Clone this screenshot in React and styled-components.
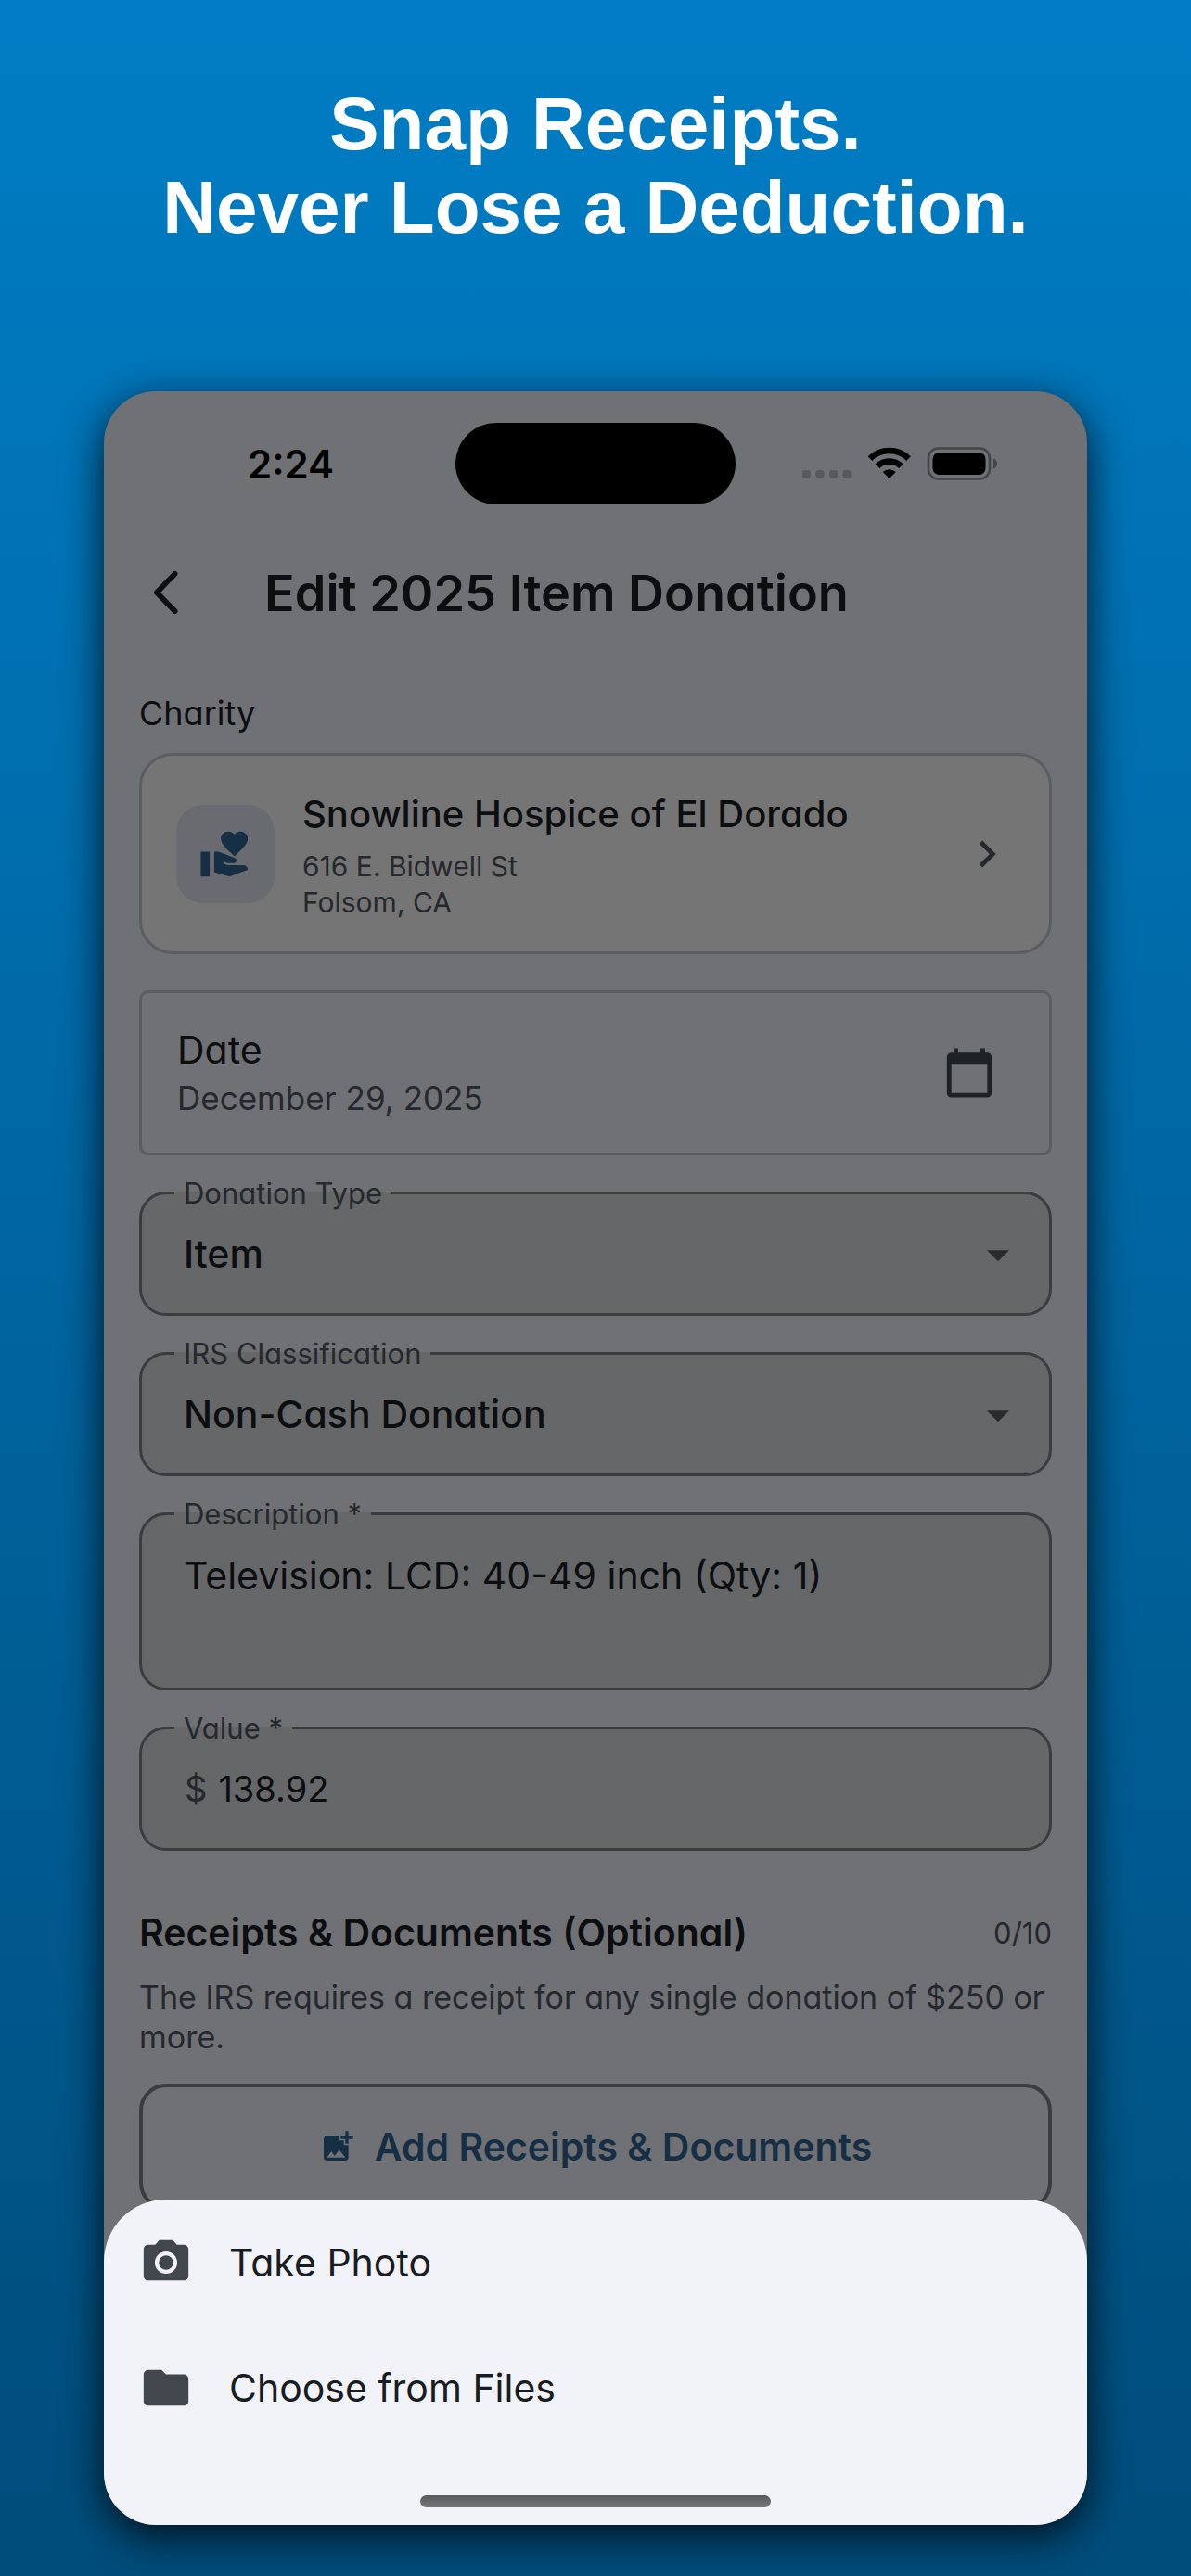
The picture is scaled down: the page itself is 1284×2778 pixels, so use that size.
import React from 'react';
import styled, { createGlobalStyle } from 'styled-components';
import {
  MdAddPhotoAlternate,
  MdArrowDropDown,
  MdCalendarToday,
  MdCameraAlt,
  MdChevronRight,
  MdFolder,
  MdVolunteerActivism,
} from 'react-icons/md';

const palette = {
  screen: '#707175',
  card: '#757575',
  field: '#666769',
  tile: '#696b70',
  text: '#0c0e10',
  subtext: '#25282c',
  outline: '#3a3d40',
  softOutline: '#5c5d60',
  accent: '#172f45',
  sheet: '#f1f3f9',
};

const GlobalStyle = createGlobalStyle`
  * {
    box-sizing: border-box;
  }
  body {
    margin: 0;
    font-family: Inter, 'Open Sans', sans-serif;
    font-feature-settings: 'cv11';
  }
  button,
  input,
  select,
  textarea {
    font: inherit;
    font-feature-settings: inherit;
    color: inherit;
    margin: 0;
    padding: 0;
    border: none;
    background: none;
    text-align: left;
  }
`;

const Page = styled.div`
  min-height: 100vh;
  display: flex;
  flex-direction: column;
  padding: 89px 112px 55px;
  background: linear-gradient(180deg, #007dc5 0%, #004c7a 100%);
`;

const Headline = styled.h1`
  margin: 0 -60px;
  font-family: 'Liberation Sans', Arial, sans-serif;
  font-size: 80px;
  line-height: 90px;
  font-weight: 700;
  text-align: center;
  color: white;
`;

const Phone = styled.main`
  flex: 1;
  position: relative;
  display: flex;
  flex-direction: column;
  margin-top: 153px;
  border-radius: 56px;
  overflow: hidden;
  background: ${palette.screen};
  color: ${palette.text};
  box-shadow: 0 12px 44px rgba(0, 0, 0, 0.8);
`;

const StatusBar = styled.div`
  display: grid;
  grid-template-columns: 1fr 302px 1fr;
  align-items: center;
  padding-top: 34px;
  .time {
    padding-left: 155px;
    font-size: 42px;
    font-weight: 600;
    color: black;
  }
  .island {
    height: 88px;
    border-radius: 44px;
    background: black;
  }
  .signals {
    padding-left: 72px;
  }
  svg {
    display: block;
  }
`;

const AppBar = styled.header`
  display: flex;
  align-items: center;
  gap: 83px;
  height: 118px;
  margin-top: 36px;
  padding-left: 40px;
  h2 {
    margin: 0;
    font-size: 54px;
    font-weight: 600;
  }
  svg {
    display: block;
  }
`;

const Form = styled.div`
  display: flex;
  flex-direction: column;
  padding: 46px 38px 0;
`;

const SectionLabel = styled.div`
  font-size: 36px;
  line-height: 50px;
`;

const CharityCard = styled.button`
  display: flex;
  align-items: center;
  margin-top: 18px;
  padding: 0 38px 0 37px;
  height: 217px;
  border: 3px solid ${palette.softOutline};
  border-radius: 36px;
  background: ${palette.card};
  .tile {
    display: flex;
    align-items: center;
    justify-content: center;
    width: 106px;
    height: 106px;
    margin-right: 30px;
    border-radius: 29px;
    background: ${palette.tile};
    color: ${palette.accent};
  }
  .info {
    flex: 1;
  }
  .name {
    margin-bottom: 8px;
    font-size: 40px;
    line-height: 58px;
    font-weight: 500;
  }
  .address {
    font-size: 30px;
    line-height: 39px;
    color: ${palette.subtext};
  }
  svg {
    display: block;
  }
`;

const DateBox = styled.button`
  display: flex;
  align-items: center;
  justify-content: space-between;
  margin-top: 39px;
  padding: 0 57px 0 38px;
  height: 178px;
  border: 3px solid ${palette.softOutline};
  border-radius: 10px;
  .title {
    font-size: 41px;
    line-height: 54px;
  }
  .value {
    font-size: 35px;
    line-height: 50px;
    color: ${palette.subtext};
  }
`;

const Field = styled.div`
  position: relative;
  display: flex;
  margin-top: 39px;
  height: ${(props) => (props.$tall ? '192px' : '134px')};
  border: 3px solid ${palette.outline};
  border-radius: 29px;
  background: ${palette.field};
  label {
    position: absolute;
    top: -20px;
    left: 35px;
    padding: 0 10px;
    font-size: 31px;
    line-height: 38px;
    color: ${palette.subtext};
    background: linear-gradient(
      ${palette.screen} 17px,
      ${palette.field} 17px
    );
  }
  input,
  select,
  textarea {
    flex: 1;
    min-width: 0;
    appearance: none;
    resize: none;
    outline: none;
    padding: 0 45px;
    font-size: 41px;
    line-height: 54px;
  }
  select {
    font-weight: 500;
  }
  textarea {
    padding-top: 38px;
  }
  .prefix {
    align-self: center;
    padding-left: 46px;
    font-size: 38px;
    color: ${palette.subtext};
  }
  .prefix + input {
    padding-left: 12px;
    font-size: 38px;
  }
  svg {
    position: absolute;
    right: 26px;
    top: 36px;
    color: #292a2b;
    pointer-events: none;
  }
`;

const ReceiptsHeader = styled.div`
  display: flex;
  align-items: center;
  justify-content: space-between;
  margin-top: 58px;
  h3 {
    margin: 0;
    font-size: 41px;
    line-height: 60px;
    font-weight: 600;
  }
  span {
    font-size: 31px;
    color: ${palette.subtext};
  }
`;

const Hint = styled.p`
  margin: 18px 0 0;
  font-size: 34px;
  line-height: 43px;
  color: ${palette.subtext};
`;

const AddButton = styled.button`
  display: flex;
  align-items: center;
  justify-content: center;
  gap: 20px;
  height: 136px;
  margin-top: 29px;
  border: 4px solid ${palette.outline};
  border-radius: 29px;
  font-size: 41px;
  font-weight: 600;
  color: ${palette.accent};
`;

const Sheet = styled.div`
  position: absolute;
  left: 0;
  right: 0;
  bottom: 0;
  display: flex;
  flex-direction: column;
  border-radius: 67px 67px 0 0;
  background: ${palette.sheet};
`;

const SheetItem = styled.button`
  display: flex;
  align-items: center;
  gap: 39px;
  height: 135px;
  padding-left: 38px;
  font-size: 41px;
  color: #191c20;
  svg {
    color: #42474e;
  }
`;

const HomeIndicator = styled.div`
  align-self: center;
  width: 378px;
  height: 13px;
  margin: 49px 0 19px;
  border-radius: 7px;
  background: linear-gradient(#55585c, #787878);
`;

const StatusIcons = () => (
  <svg width="212" height="36" viewBox="0 0 212 36">
    <g fill="#58595c">
      <rect x="0" y="25" width="9" height="9" rx="3" />
      <rect x="14.5" y="25" width="9" height="9" rx="3" />
      <rect x="29" y="25" width="9" height="9" rx="3" />
      <rect x="43.5" y="25" width="9" height="9" rx="3" />
    </g>
    <g fill="none" stroke="#000" strokeWidth="6.6">
      <path d="M73 12.6a29.5 29.5 0 0 1 41.5 0" />
      <path d="M81 20.6a18.3 18.3 0 0 1 25.5 0" />
    </g>
    <path d="M93.8 34l-7-7a10 10 0 0 1 14 0z" />
    <rect
      x="136"
      y="1.5"
      width="66"
      height="33"
      rx="10.5"
      fill="none"
      stroke="#45464a"
      strokeWidth="2.6"
    />
    <rect x="140.5" y="6" width="57" height="24" rx="7" />
    <path d="M206 12.5q4 1.5 4 5.5t-4 5.5z" fill="#45464a" />
  </svg>
);

const BackIcon = () => (
  <svg width="50" height="50" viewBox="0 0 50 50">
    <path
      d="M36.5 5L17 25l19.5 20"
      fill="none"
      stroke="currentColor"
      strokeWidth="6"
      strokeLinecap="round"
      strokeLinejoin="round"
    />
  </svg>
);

const SelectField = ({ id, label, value }) => (
  <Field>
    <label htmlFor={id}>{label}</label>
    <select id={id} defaultValue={value}>
      <option>{value}</option>
    </select>
    <MdArrowDropDown size={58} />
  </Field>
);

const App = () => {
  return (
    <Page>
      <GlobalStyle />
      <Headline>
        Snap Receipts.
        <br />
        Never Lose a Deduction.
      </Headline>
      <Phone>
        <StatusBar>
          <span className="time">2:24</span>
          <span className="island" />
          <span className="signals">
            <StatusIcons />
          </span>
        </StatusBar>
        <AppBar>
          <button type="button" aria-label="Back">
            <BackIcon />
          </button>
          <h2>Edit 2025 Item Donation</h2>
        </AppBar>
        <Form>
          <SectionLabel>Charity</SectionLabel>
          <CharityCard type="button">
            <div className="tile">
              <MdVolunteerActivism size={58} />
            </div>
            <div className="info">
              <div className="name">Snowline Hospice of El Dorado</div>
              <div className="address">
                616 E. Bidwell St
                <br />
                Folsom, CA
              </div>
            </div>
            <MdChevronRight size={58} color={palette.subtext} />
          </CharityCard>
          <DateBox type="button">
            <div>
              <div className="title">Date</div>
              <div className="value">December 29, 2025</div>
            </div>
            <MdCalendarToday size={58} color="#1e2225" />
          </DateBox>
          <SelectField id="type" label="Donation Type" value="Item" />
          <SelectField
            id="irs"
            label="IRS Classification"
            value="Non-Cash Donation"
          />
          <Field $tall>
            <label htmlFor="description">Description *</label>
            <textarea
              id="description"
              defaultValue="Television: LCD: 40-49 inch (Qty: 1)"
            />
          </Field>
          <Field>
            <label htmlFor="value">Value *</label>
            <span className="prefix">$</span>
            <input id="value" defaultValue="138.92" />
          </Field>
          <ReceiptsHeader>
            <h3>Receipts &amp; Documents (Optional)</h3>
            <span>0/10</span>
          </ReceiptsHeader>
          <Hint>
            The IRS requires a receipt for any single donation of $250 or more.
          </Hint>
          <AddButton type="button">
            <MdAddPhotoAlternate size={40} />
            Add Receipts &amp; Documents
          </AddButton>
        </Form>
        <Sheet>
          <SheetItem type="button">
            <MdCameraAlt size={58} />
            Take Photo
          </SheetItem>
          <SheetItem type="button">
            <MdFolder size={58} />
            Choose from Files
          </SheetItem>
          <HomeIndicator />
        </Sheet>
      </Phone>
    </Page>
  );
};

export default App;
